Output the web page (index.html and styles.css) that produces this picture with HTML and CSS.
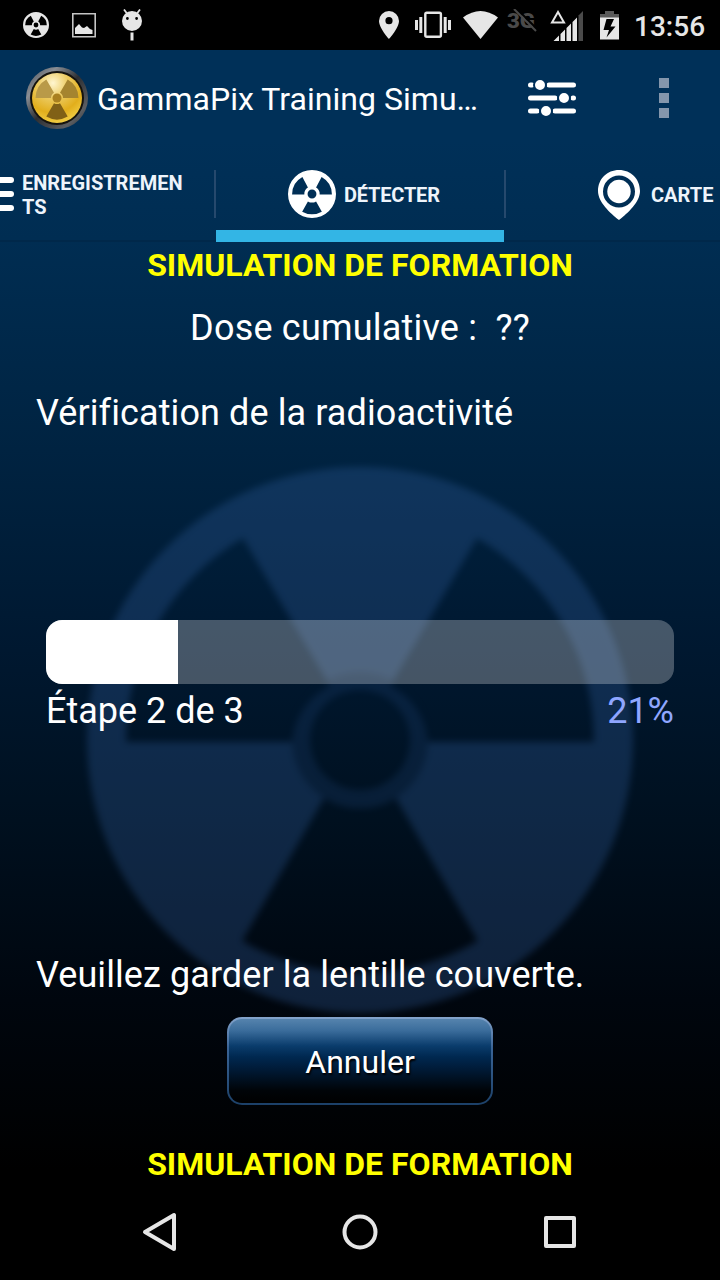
FILE: index.html
```html
<!DOCTYPE html>
<html lang="fr">
<head>
    <meta charset="UTF-8">
    <meta name="viewport" content="width=device-width, initial-scale=1.0">
    <title>GammaPix</title>
    <link rel="stylesheet" href="styles.css">
</head>
<body>
    <!-- radiation sign, used in several sizes -->
    <svg class="defs" width="0" height="0">
        <symbol id="radiation" viewBox="-100 -100 200 200">
            <path fill-rule="evenodd" d="M-100 0A100 100 0 1 1 100 0A100 100 0 1 1 -100 0Z
                M-83 2A83 83 0 0 1 -40 -71L-17 -27A32 32 0 0 0 -32 2Z
                M83 2A83 83 0 0 0 40 -71L17 -27A32 32 0 0 1 32 2Z
                M41 73.600A85 85 0 0 1 -41 73.600L-17 31A34 34 0 0 0 17 31Z
                M-18.5 0A18.5 18.5 0 1 0 18.5 0A18.5 18.5 0 1 0 -18.5 0Z"/>
        </symbol>
    </svg>

    <div class="status-bar">
        <div class="status-left">
            <svg width="26" height="26"><use href="#radiation"/></svg>
            <svg class="picture" width="24" height="25" viewBox="0 0 24 25">
                <path d="M0.8 0.8H23.2V23.7H0.8Z" fill="none" stroke="#c4c4c4" stroke-width="1.6"/>
                <path d="M3 21V15L7 11L10 14.500L12 15L15 13L18 16L20.500 17V21Z"/>
            </svg>
            <svg width="22" height="32" viewBox="0 0 22 32">
                <path fill-rule="evenodd" d="M1 12A10 10 0 0 1 21 12A10 10 0 0 1 1 12ZM5 9.500A1.400 1.400 0 1 0 7.800 9.500A1.400 1.400 0 1 0 5 9.500ZM14.200 9.500A1.400 1.400 0 1 0 17 9.500A1.400 1.400 0 1 0 14.200 9.500Z"/>
                <path d="M3 0.500L6 4.500M19 0.500L16 4.500" stroke="#e6e6e6" stroke-width="1.800"/>
                <rect x="9.500" y="23.500" width="3" height="8"/>
            </svg>
        </div>
        <div class="status-right">
            <svg width="20" height="28" viewBox="0 0 20 28">
                <path fill-rule="evenodd" d="M10 0A10 10 0 0 1 20 10C20 17 10 28 10 28S0 17 0 10A10 10 0 0 1 10 0ZM6.400 9.700A3.600 3.600 0 1 0 13.600 9.700A3.600 3.600 0 1 0 6.400 9.700Z"/>
            </svg>
            <svg class="vibrate" width="36" height="28" viewBox="0 0 36 28">
                <rect x="10.300" y="1.800" width="15.600" height="24" rx="1.500" fill="none" stroke="#e6e6e6" stroke-width="2.400"/>
                <path d="M0 9H3V19H0ZM4.300 6H7.300V22H4.300ZM28.700 6H31.700V22H28.700ZM33 9H36V19H33Z"/>
            </svg>
            <svg class="wifi" width="35" height="28" viewBox="0 0 35 28">
                <path d="M0 6.500Q17.500 -6.500 35 6.500L17.500 28Z"/>
            </svg>
            <svg class="no-data" width="30" height="24" viewBox="0 0 30 24">
                <text x="0" y="19" textLength="28" lengthAdjust="spacingAndGlyphs">3G</text>
                <path d="M9 -1L31 21" stroke="#000" stroke-width="2"/>
                <path d="M7 0L29 22" stroke="#4a4a4a" stroke-width="2"/>
            </svg>
            <svg class="signal" width="34" height="31" viewBox="0 0 34 31">
                <path d="M8 2L14 12.500H2Z" fill="none" stroke="#e6e6e6" stroke-width="2"/>
                <path d="M3.500 31L9 25.500V31ZM10.500 24L15 19.500V31H10.500ZM16.500 18L21 13.500V31H16.500ZM22.500 12L27 7.500V31H22.500Z"/>
                <path d="M28.500 5.500L33 1V31H28.500Z" fill="#4a4a4a"/>
            </svg>
            <svg class="battery" width="19" height="30" viewBox="0 0 19 30">
                <path d="M5 1H14V4H19V8H0V4H5Z" fill="#5a5a5a"/>
                <path fill-rule="evenodd" d="M0 7.500H19V29.500H0ZM6.500 9L3.500 20H9L6.500 27.500L15.500 16.500H10.500L14 9Z"/>
            </svg>
            <span class="clock">13:56</span>
        </div>
    </div>

    <div class="app">
        <svg class="watermark" width="550" height="550" viewBox="-275 -275 550 550">
            <path fill-rule="evenodd" d="M-273 0A273 273 0 1 1 273 0A273 273 0 1 1 -273 0Z
                M-234 2A234 234 0 0 1 -117 -202L-30 -54A68 68 0 0 0 -68 2Z
                M234 2A234 234 0 0 0 117 -202L30 -54A68 68 0 0 1 68 2Z
                M118 201A234 234 0 0 1 -118 201L-36 58A68 68 0 0 0 36 58Z
                M-50 0A50 50 0 1 0 50 0A50 50 0 1 0 -50 0Z"/>
            <circle class="hub" r="59"/>
        </svg>

        <div class="action-bar">
            <svg class="logo" width="64" height="64" viewBox="-32 -32 64 64">
                <defs>
                    <linearGradient id="rim" x1="0" y1="0" x2="1" y2="1">
                        <stop offset="0" stop-color="#454a52"/>
                        <stop offset="0.25" stop-color="#8a8e94"/>
                        <stop offset="0.5" stop-color="#2c2e32"/>
                        <stop offset="0.8" stop-color="#5c5e62"/>
                        <stop offset="1" stop-color="#26292d"/>
                    </linearGradient>
                    <radialGradient id="gold" cx="0.42" cy="0.2" r="0.85">
                        <stop offset="0" stop-color="#fff6d0"/>
                        <stop offset="0.35" stop-color="#eccb62"/>
                        <stop offset="0.7" stop-color="#e2ae1c"/>
                        <stop offset="1" stop-color="#f4d24a"/>
                    </radialGradient>
                </defs>
                <circle r="31" fill="url(#rim)"/>
                <circle r="27" fill="#15130e"/>
                <circle r="25" fill="url(#gold)"/>
                <path d="M-21.500 0A21.500 21.500 0 0 1 -10.700 -18.600L-3 -5.200A6 6 0 0 0 -6 0Z" fill="#b99a48"/>
                <path d="M21.500 0A21.500 21.500 0 0 0 10.700 -18.600L3 -5.200A6 6 0 0 1 6 0Z" fill="#a5842f"/>
                <path d="M10.700 18.600A21.500 21.500 0 0 1 -10.700 18.600L-3 5.200A6 6 0 0 0 3 5.200Z" fill="#806016"/>
                <circle r="4.500" fill="#a98020"/>
            </svg>
            <h1 class="title">GammaPix Training Simu…</h1>
            <svg class="settings" width="48" height="36" viewBox="0 0 48 36">
                <path d="M2.500 5H4M21 5H45.500M2.500 18H27M45 18H45.500M2.500 31H9M27 31H45.500" stroke="#fff" stroke-width="5" stroke-linecap="round"/>
                <g stroke="#00305a" stroke-width="2">
                    <circle cx="12" cy="5" r="6"/>
                    <circle cx="36" cy="18" r="6"/>
                    <circle cx="18" cy="31" r="6"/>
                </g>
            </svg>
            <div class="overflow"><i></i><i></i><i></i></div>
        </div>

        <div class="tabs">
            <div class="tab tab-records">
                <div class="list-icon"><i></i><i></i><i></i></div>
                <span>ENREGISTREMENTS</span>
            </div>
            <div class="tab tab-detect active">
                <svg width="48" height="48"><use href="#radiation"/></svg>
                <span>DÉTECTER</span>
            </div>
            <div class="tab tab-map">
                <svg width="44" height="50" viewBox="0 0 44 50">
                    <path fill-rule="evenodd" d="M22 0C34 0 43 9 43 21C43 32 31 43 22 50C13 43 1 32 1 21C1 9 10 0 22 0ZM6 21.500A16 16 0 1 0 38 21.500A16 16 0 1 0 6 21.500Z"/>
                    <circle cx="22" cy="21.500" r="11.700"/>
                </svg>
                <span>CARTE</span>
            </div>
        </div>

        <div class="content">
            <div class="banner">SIMULATION DE FORMATION</div>
            <div class="dose">Dose cumulative :&nbsp; ??</div>
            <div class="message">Vérification de la radioactivité</div>
            <div class="progress"><div class="progress-fill" style="width: 21%;"></div></div>
            <div class="progress-labels">
                <span>Étape 2 de 3</span>
                <span class="percent">21%</span>
            </div>
            <div class="hint">Veuillez garder la lentille couverte.</div>
            <button class="cancel">Annuler</button>
            <div class="banner banner-bottom">SIMULATION DE FORMATION</div>
        </div>

        <div class="nav-bar">
            <svg width="40" height="40" viewBox="0 0 40 40"><path d="M34 3V37L5 20Z"/></svg>
            <svg width="40" height="40" viewBox="0 0 40 40"><circle cx="20" cy="20" r="15.500"/></svg>
            <svg width="40" height="40" viewBox="0 0 40 40"><rect x="6" y="6" width="28" height="28"/></svg>
        </div>
    </div>
</body>
</html>
```
FILE: styles.css
```css
* {
    box-sizing: border-box;
}

body {
    margin: 0;
    width: 720px;
    height: 1280px;
    overflow: hidden;
    background-color: #000;
    color: #fff;
    font-family: Roboto, "Noto Sans", sans-serif;
}

svg {
    display: block;
    flex: none;
    fill: #fff;
}

.defs {
    position: absolute;
}

/* status bar */
.status-bar {
    display: flex;
    justify-content: space-between;
    height: 50px;
    padding: 0 16px 0 23px;
}

.status-bar svg {
    fill: #e6e6e6;
}

.status-left,
.status-right {
    display: flex;
    align-items: center;
}

.picture {
    margin: 0 25px 0 23px;
}

.vibrate {
    margin-left: 16px;
}

.wifi {
    margin-left: 12px;
}

.status-bar .no-data {
    margin: 0 0 8px 9px;
    fill: #4a4a4a;
    font-size: 21px;
    font-weight: 900;
}

.signal {
    margin-left: 13px;
}

.battery {
    margin-left: 16px;
}

.clock {
    width: 70px;
    margin: 3px 0 0 15px;
    font-size: 28px;
    font-weight: 500;
    color: #e6e6e6;
    white-space: nowrap;
}

.app {
    position: relative;
    height: 1230px;
    background: linear-gradient(#003058 0, #003058 90px, #002d52 190px, #002341 400px, #001830 600px, #00101f 770px, #00060e 950px, #000 1120px);
}

.watermark {
    position: absolute;
    top: 415px;
    left: 85px;
    fill: #3260a0;
    opacity: 0.3;
    filter: blur(3.5px);
}

.hub {
    fill: none;
    stroke: #00142a;
    stroke-width: 18px;
    opacity: 0.45;
}

.action-bar,
.tabs,
.content,
.nav-bar {
    position: relative;
}

.action-bar {
    display: flex;
    align-items: center;
    height: 96px;
    padding: 0 51px 0 25px;
}

.title {
    width: 431px;
    margin: 2px 0 0;
    padding-left: 8px;
    font-size: 32px;
    font-weight: 400;
    letter-spacing: 0.04px;
    white-space: nowrap;
}

.settings {
    margin-left: 8px;
}

.overflow {
    display: flex;
    flex-direction: column;
    gap: 5px;
    margin-left: auto;
}

.overflow i {
    width: 10px;
    height: 10px;
    background-color: #8496ac;
}

/* tabs */
.tabs {
    display: flex;
    height: 96px;
    background: linear-gradient(#00284a, #00284a) 0 94px / 100% 2px no-repeat;
}

.tab {
    display: flex;
    flex: none;
    align-items: center;
    height: 96px;
    font-size: 20px;
    font-weight: 700;
    line-height: 24px;
    color: #eef4fb;
}

.tab span {
    padding-top: 2px;
}

.tab-records {
    width: 216px;
    background: linear-gradient(#26496d, #26496d) right center / 2px 48px no-repeat;
}

.tab-records span {
    width: 166px;
    margin-left: 8px;
    word-break: break-all;
}

.list-icon {
    display: flex;
    flex-direction: column;
    gap: 8px;
    width: 14px;
}

.list-icon i {
    height: 6px;
    border-radius: 0 3px 3px 0;
    background-color: #fff;
}

.tab-detect {
    gap: 8px;
    width: 288px;
    padding-left: 72px;
    letter-spacing: -0.2px;
}

.active {
    background: linear-gradient(#33b5e5, #33b5e5) bottom / 100% 12px no-repeat;
}

.tab-map {
    width: 216px;
    padding-left: 93px;
    gap: 10px;
    background: linear-gradient(#26496d, #26496d) left center / 2px 48px no-repeat;
}

.tab-map svg {
    margin-top: 2px;
}

/* content */
.content {
    display: flex;
    flex-direction: column;
    height: 942px;
    font-size: 36px;
    line-height: 42px;
}

.banner {
    font-size: 32px;
    font-weight: 700;
    line-height: 46px;
    text-align: center;
    color: #ff0;
}

.dose {
    margin-top: 19px;
    letter-spacing: 0.2px;
    text-align: center;
}

.message {
    margin: 43px 36px 0;
    letter-spacing: 0.1px;
}

.progress {
    height: 64px;
    margin: 186px 46px 0;
    border-radius: 16px;
    overflow: hidden;
    background-color: rgba(255, 255, 255, 0.27);
}

.progress-fill {
    height: 100%;
    background-color: #fff;
}

.progress-labels {
    display: flex;
    justify-content: space-between;
    margin: 6px 46px 0;
}

.percent {
    color: #8fa6ff;
}

.hint {
    margin: 222px 36px 0;
    letter-spacing: 0.08px;
}

.cancel {
    align-self: center;
    width: 266px;
    height: 88px;
    margin-top: 21px;
    padding: 2px 0 0;
    border: 2px solid transparent;
    border-radius: 15px;
    background: linear-gradient(#5583ad 0, #3a6c9b 14%, #0a3c6c 32%, #002850 45%, #001c3a 58%, #000408 85%, #000 100%) padding-box,
                linear-gradient(#84a4cc, #3a6496 35%, #1c4068) border-box;
    font-family: inherit;
    font-size: 32px;
    color: #fff;
    text-shadow: 1px 2px 2px #000;
}

.banner-bottom {
    margin-top: 39px;
    line-height: 40px;
}

.nav-bar {
    display: flex;
    justify-content: center;
    align-items: center;
    gap: 160px;
    height: 96px;
}

.nav-bar svg {
    fill: none;
    stroke: #e6e6e6;
    stroke-width: 4px;
    stroke-linejoin: round;
}
```
